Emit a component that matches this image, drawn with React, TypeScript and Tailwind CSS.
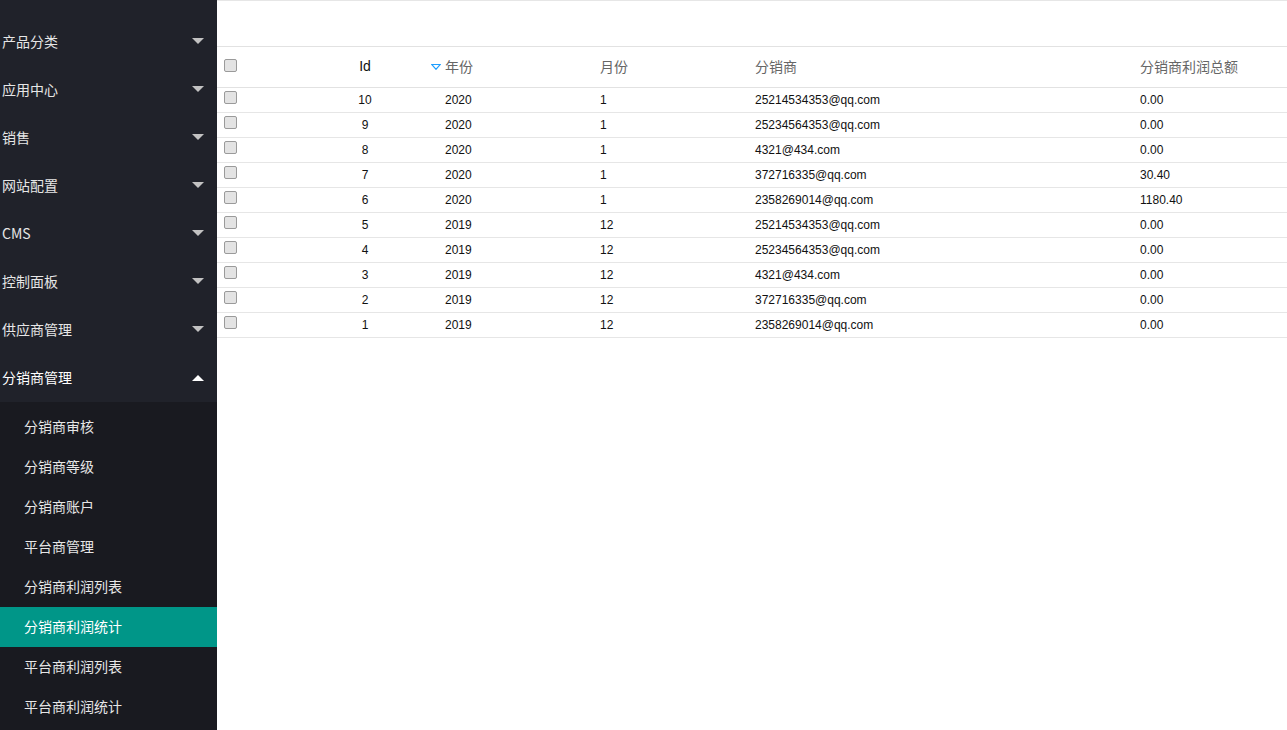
import React from "react";

const topMenus = ["产品分类", "应用中心", "销售", "网站配置", "CMS", "控制面板", "供应商管理"];
const subMenus = ["分销商审核", "分销商等级", "分销商账户", "平台商管理", "分销商利润列表", "分销商利润统计", "平台商利润列表", "平台商利润统计"];

const rows = [
  ["10", "2020", "1", "25214534353@qq.com", "0.00"],
  ["9", "2020", "1", "25234564353@qq.com", "0.00"],
  ["8", "2020", "1", "4321@434.com", "0.00"],
  ["7", "2020", "1", "372716335@qq.com", "30.40"],
  ["6", "2020", "1", "2358269014@qq.com", "1180.40"],
  ["5", "2019", "12", "25214534353@qq.com", "0.00"],
  ["4", "2019", "12", "25234564353@qq.com", "0.00"],
  ["3", "2019", "12", "4321@434.com", "0.00"],
  ["2", "2019", "12", "372716335@qq.com", "0.00"],
  ["1", "2019", "12", "2358269014@qq.com", "0.00"],
];

function Caret({ up }: { up?: boolean }) {
  return (
    <svg width="12" height="6" viewBox="0 0 12 6" className="shrink-0">
      {up ? <polygon points="0,6 12,6 6,0" fill="#ffffff" /> : <polygon points="0,0 12,0 6,6" fill="#c2c2c2" />}
    </svg>
  );
}

function Check() {
  return <div className="w-[13px] h-[13px] rounded-[2px] border border-[#9a9a9a] bg-[#e3e3e3]" />;
}

export default function App() {
  return (
    <div className="flex w-[1287px] h-[730px] overflow-hidden bg-white" style={{ fontFamily: '"Liberation Sans", "Noto Sans CJK SC", sans-serif' }}>
      <aside className="w-[217px] shrink-0 h-full bg-[#20222a] pt-[17px] flex flex-col" style={{ fontFamily: '"Noto Sans CJK SC", sans-serif' }}>
        {topMenus.map((m) => (
          <div key={m} className="h-[48px] flex items-center justify-between pl-[2px] pr-[13px] text-[14px] text-[#e6e6e6]">
            <span>{m}</span>
            <Caret />
          </div>
        ))}
        <div className="h-[49px] flex items-center justify-between pl-[2px] pr-[13px] text-[14px] text-white">
          <span>分销商管理</span>
          <Caret up />
        </div>
        <div className="flex-1 bg-[#191a20] pt-[5px]">
          {subMenus.map((s) => (
            <div
              key={s}
              className={
                "h-[40px] flex items-center pl-[24px] pb-[1px] text-[14px] " +
                (s === "分销商利润统计" ? "bg-[#009688] text-white" : "text-[#e6e6e6]")
              }
            >
              {s}
            </div>
          ))}
        </div>
      </aside>
      <main className="flex-1 border-t border-[#e6e6e6]">
        <div className="h-[46px] border-b border-[#e2e2e2]" />
        <table className="table-fixed w-full border-collapse">
          <colgroup>
            <col className="w-[83px]" />
            <col className="w-[130px]" />
            <col className="w-[155px]" />
            <col className="w-[155px]" />
            <col className="w-[385px]" />
            <col />
          </colgroup>
          <thead>
            <tr className="h-[40px] border-b border-[#e2e2e2] text-[14px] text-[#666]" style={{ fontFamily: '"Noto Sans CJK SC", sans-serif' }}>
              <th className="pl-[7px] font-normal text-left align-middle">
                <div className="-mt-[3px]"><Check /></div>
              </th>
              <th className="font-normal text-center text-[#111]" style={{ fontFamily: '"Liberation Sans", sans-serif' }}>Id</th>
              <th className="font-normal text-left pl-[15px] relative">
                <span className="inline-flex items-center">
                  <svg width="10" height="6" viewBox="0 0 10 6" className="absolute left-[1px] top-[17px]">
                    <polygon points="0.7,0.5 9.3,0.5 5,5.3" fill="none" stroke="#1e9fff" strokeWidth="1.2" />
                  </svg>
                  年份
                </span>
              </th>
              <th className="font-normal text-left pl-[15px]">月份</th>
              <th className="font-normal text-left pl-[15px]">分销商</th>
              <th className="font-normal text-left pl-[15px]">分销商利润总额</th>
            </tr>
          </thead>
          <tbody>
            {rows.map((r) => (
              <tr key={r[0]} className="h-[25px] border-b border-[#e6e6e6] text-[12px] text-[#111]">
                <td className="pl-[7px] align-top pt-[3px]"><Check /></td>
                <td className="text-center">{r[0]}</td>
                <td className="pl-[15px]">{r[1]}</td>
                <td className="pl-[15px]">{r[2]}</td>
                <td className="pl-[15px]">{r[3]}</td>
                <td className="pl-[15px]">{r[4]}</td>
              </tr>
            ))}
          </tbody>
        </table>
      </main>
    </div>
  );
}
